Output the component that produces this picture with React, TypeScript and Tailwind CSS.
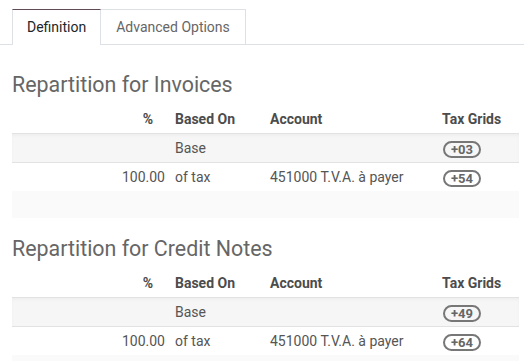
import React from "react";

const font = { fontFamily: "Roboto, 'Liberation Sans', sans-serif" };

function Pill({ v }: { v: string }) {
  return (
    <span className="inline-flex h-[17px] items-center rounded-full border-2 border-[#777777] px-[6px] text-[13px] font-bold leading-none text-[#666666]">
      {v}
    </span>
  );
}

function Section({ title, tags, mt }: { title: string; tags: [string, string]; mt: string }) {
  const cols = "grid grid-cols-[158px_95px_172px_82px]";
  return (
    <div className={mt}>
      <h2 className="pl-[12px] text-[21.4px] leading-[28px] text-[#666666]">{title}</h2>
      <div className="ml-[12px] mt-[5px] w-[507px] text-[14px] text-[#555555]">
        <div className={`${cols} h-[30px] items-center border-b border-[#e2e2e2] pt-[1px] font-bold text-[#4c4c4c]`}>
          <div className="pr-[17px] text-right">%</div>
          <div className="pl-[5px]">Based On</div>
          <div className="pl-[5px]">Account</div>
          <div className="pl-[5px]">Tax Grids</div>
        </div>
        <div className={`${cols} h-[29px] items-center border-b border-[#e2e2e2] bg-[#f6f6f6] shadow-[inset_0_2px_3px_rgba(0,0,0,0.03)]`}>
          <div />
          <div className="pl-[5px]">Base</div>
          <div />
          <div className="flex pl-[6px] pt-[3px]">
            <Pill v={tags[0]} />
          </div>
        </div>
        <div className={`${cols} h-[28px] items-center`}>
          <div className="pr-[5px] text-right">100.00</div>
          <div className="pl-[5px]">of tax</div>
          <div className="pl-[5px]">451000 T.V.A. à payer</div>
          <div className="flex pl-[6px] pt-[2px]">
            <Pill v={tags[1]} />
          </div>
        </div>
        <div className="h-[27px] bg-[#fafafa]" />
      </div>
    </div>
  );
}

export default function App() {
  return (
    <div className="h-[361px] w-[524px] overflow-hidden bg-white" style={font}>
      <div className="flex h-[45px] items-end border-b border-[#dde0e4] pl-[12px]">
        <div className="-mb-px flex h-[36px] items-center border-x border-t border-[#dde0e4] border-t-[#5f4a58] bg-white px-[14px] text-[14px] text-[#212529]">
          Definition
        </div>
        <div className="flex h-[35px] items-center border-r border-t border-[#dde0e4] px-[15px] text-[14px] text-[#666666]">
          Advanced Options
        </div>
      </div>
      <Section title="Repartition for Invoices" tags={["+03", "+54"]} mt="mt-[26px]" />
      <Section title="Repartition for Credit Notes" tags={["+49", "+64"]} mt="mt-[17px]" />
    </div>
  );
}
